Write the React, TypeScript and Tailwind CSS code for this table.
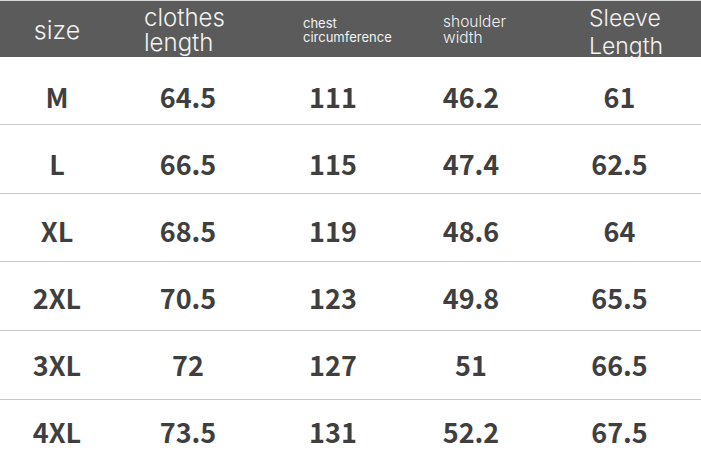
import React from 'react';

const rows = [
  { cells: ['M', '64.5', '111', '46.2', '61'], h: 'h-[68px]', pt: 'pt-[13px]' },
  { cells: ['L', '66.5', '115', '47.4', '62.5'], h: 'h-[69px]', pt: 'pt-[10px]' },
  { cells: ['XL', '68.5', '119', '48.6', '64'], h: 'h-[68px]', pt: 'pt-[7px]' },
  { cells: ['2XL', '70.5', '123', '49.8', '65.5'], h: 'h-[69px]', pt: 'pt-[4px]' },
  { cells: ['3XL', '72', '127', '51', '66.5'], h: 'h-[69px]', pt: 'pt-0' },
  { cells: ['4XL', '73.5', '131', '52.2', '67.5'], h: 'h-[66px]', pt: 'pb-[2px]' },
];

const cols = 'grid grid-cols-[114px_148px_142px_134px_163px]';

const App: React.FC = () => {
  return (
    <div className="w-[701px] h-[466px] bg-white overflow-hidden">
      <div
        className={`${cols} h-[57px] bg-[#5b5b5b] text-[#f2f2f2] border-t border-[#d9d9d9]`}
        style={{ fontFamily: 'Inter, "Noto Sans", sans-serif' }}
      >
        <div className="flex items-center justify-center text-[25px] font-light pt-[1px]">size</div>
        <div className="flex flex-col justify-center pl-[30px] text-[24px] font-light leading-[25px] pb-[2px]">
          <span>clothes</span>
          <span>length</span>
        </div>
        <div className="flex flex-col justify-center pl-[41px] text-[13px] leading-[14px] pb-[2px]">
          <span>chest</span>
          <span>circumference</span>
        </div>
        <div className="flex flex-col justify-center pl-[39px] text-[15.5px] font-light leading-[16px] pb-[2px]">
          <span>shoulder</span>
          <span>width</span>
        </div>
        <div className="flex flex-col justify-center pl-[51px] text-[23px] font-light leading-[28px] pt-[3px]">
          <span>Sleeve</span>
          <span>Length</span>
        </div>
      </div>
      {rows.map((r, i) => (
        <div
          key={r.cells[0]}
          className={`${cols} ${r.h} text-[#3f3f3f] text-[27px] font-bold ${i < rows.length - 1 ? 'border-b border-[#c9c9c9]' : ''}`}
          style={{ fontFamily: '"Noto Sans CJK SC", "Noto Sans", sans-serif' }}
        >
          {r.cells.map((v, j) => (
            <div key={j} className={`flex items-center justify-center ${r.pt}`}>
              {v}
            </div>
          ))}
        </div>
      ))}
    </div>
  );
};

export default App;
